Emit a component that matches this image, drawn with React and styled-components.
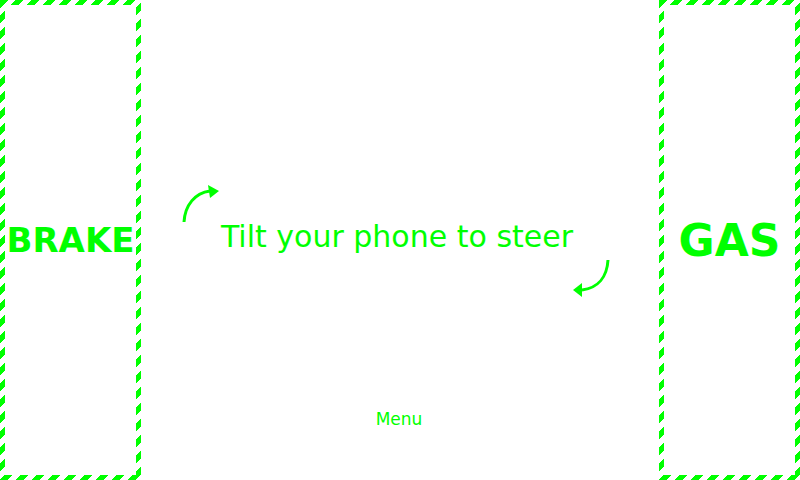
import React from "react";
import styled, { createGlobalStyle } from "styled-components";

const GREEN = "#00ff00";

const Global = createGlobalStyle`
  html, body {
    margin: 0;
    padding: 0;
    background: #ffffff;
    font-family: "DejaVu Sans", sans-serif;
  }
`;

const Screen = styled.div`
  display: flex;
  width: 800px;
  height: 480px;
  overflow: hidden;
`;

// 발판 (브레이크/가스) - 줄무늬 테두리
const Pedal = styled.div`
  box-sizing: border-box;
  width: 141px;
  height: 480px;
  flex-shrink: 0;
  display: flex;
  align-items: center;
  justify-content: center;
  border: 5px solid transparent;
  border-image: repeating-linear-gradient(
      135deg,
      ${GREEN} 0 5.66px,
      transparent 5.66px 11.31px
    )
    5;
  color: ${GREEN};
  font-weight: bold;
  font-size: ${(p) => p.size}px;
  user-select: none;
`;

const Middle = styled.div`
  flex: 1;
  display: grid;
  grid-template-rows: 1fr auto 1fr;
  padding-bottom: 7px;
`;

const SteerRow = styled.div`
  grid-row: 2;
  display: flex;
  align-items: center;
  justify-content: center;
  padding-right: 6px;
`;

const Hint = styled.div`
  color: ${GREEN};
  font-size: 30px;
  white-space: nowrap;
`;

const Arrow = styled.svg`
  width: 40px;
  height: 40px;
  flex-shrink: 0;
  overflow: visible;
  margin-bottom: ${(p) => p.up || 0}px;
  margin-top: ${(p) => p.down || 0}px;
`;

const Bottom = styled.div`
  grid-row: 3;
  display: flex;
  justify-content: center;
  align-items: flex-start;
`;

const MenuBtn = styled.button`
  margin-top: 112px;
  border: none;
  background: none;
  padding: 0 0 0 0;
  margin-right: 2px;
  color: ${GREEN};
  font-family: "DejaVu Sans", sans-serif;
  font-size: 17px;
  line-height: 20px;
  cursor: pointer;
`;

function ArrowUp() {
  return (
    <Arrow viewBox="0 0 40 40" up={63}>
      <path d="M3 37 C4 20 14 8 29 6" fill="none" stroke={GREEN} strokeWidth="3" />
      <polygon points="38,6 27,0 29,13" fill={GREEN} />
    </Arrow>
  );
}

function ArrowDown() {
  return (
    <Arrow viewBox="0 0 40 40" down={81}>
      <path d="M35 3 C34 20 25 31 9 33" fill="none" stroke={GREEN} strokeWidth="3" />
      <polygon points="0,33 9,26 9,40" fill={GREEN} />
    </Arrow>
  );
}

export default function App() {
  return (
    <>
      <Global />
      <Screen>
        <Pedal size={34}>BRAKE</Pedal>
        <Middle>
          <SteerRow>
            <ArrowUp />
            <Hint>Tilt your phone to steer</Hint>
            <ArrowDown />
          </SteerRow>
          <Bottom>
            <MenuBtn>Menu</MenuBtn>
          </Bottom>
        </Middle>
        <Pedal size={44}>GAS</Pedal>
      </Screen>
    </>
  );
}
